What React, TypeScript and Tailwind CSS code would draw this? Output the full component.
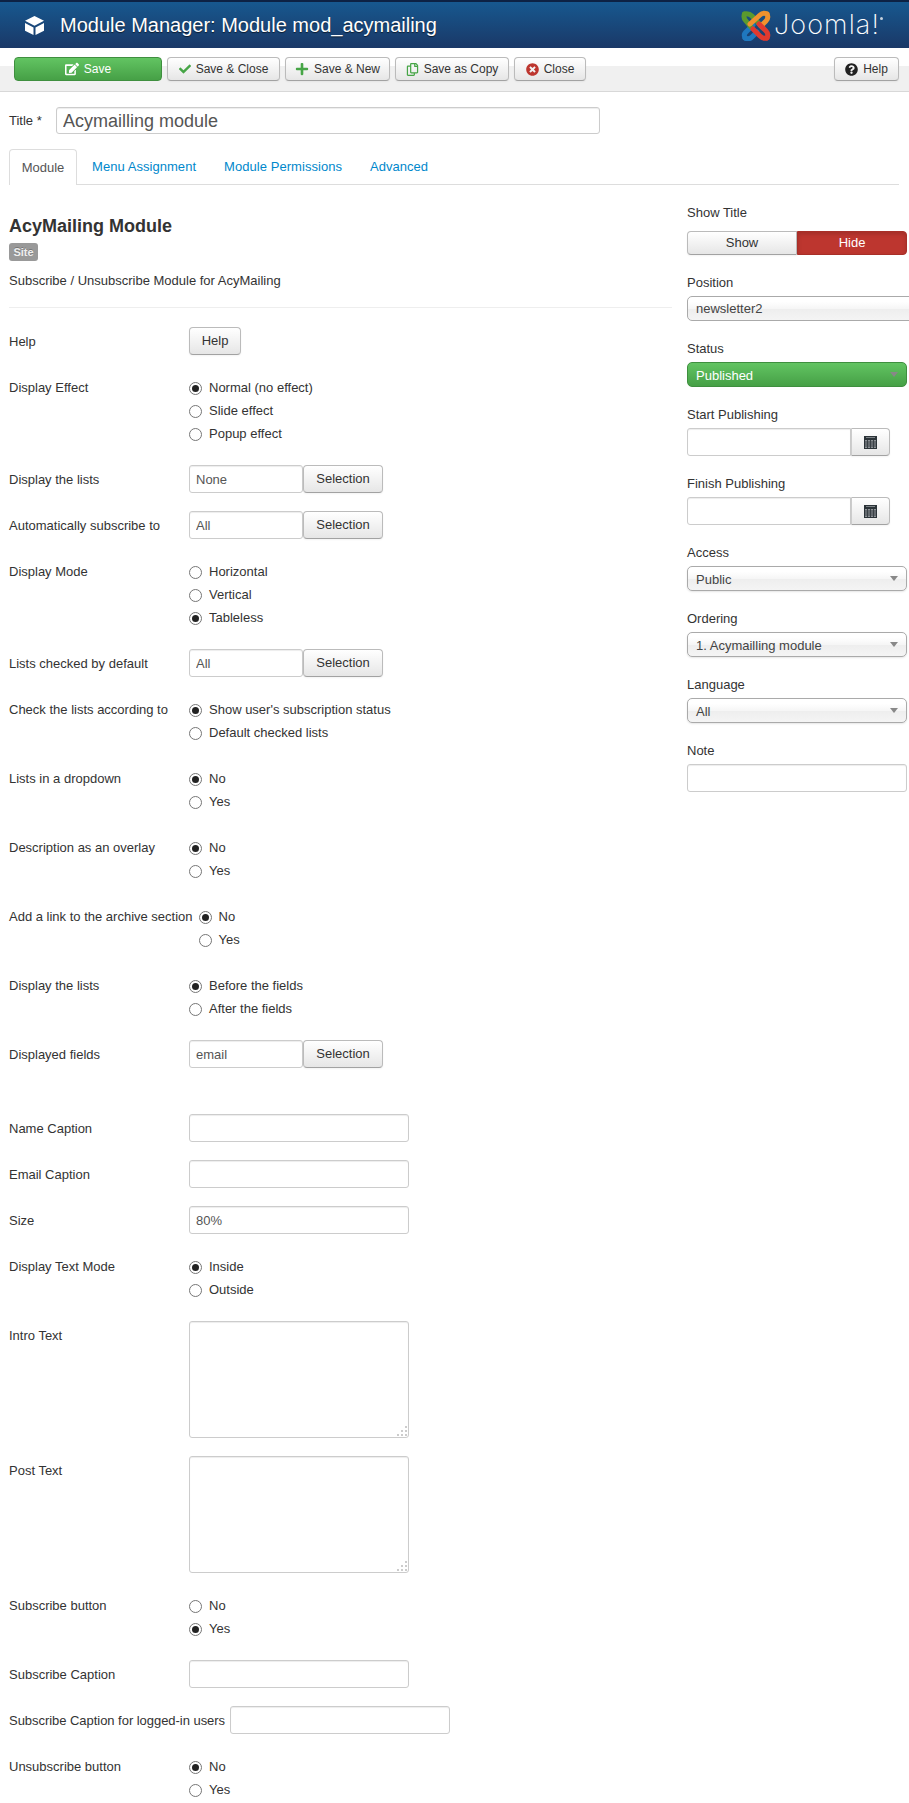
import React from 'react';
import { FaCheck, FaPlus, FaRegCopy, FaTimesCircle, FaQuestionCircle, FaEdit } from 'react-icons/fa';

const btn =
  'inline-flex items-center justify-center rounded-[4px] border border-[#bbb] border-b-[#a2a2a2] bg-[linear-gradient(#fff,#e6e6e6)] text-[#333] shadow-[inset_0_1px_0_rgba(255,255,255,.2),0_1px_2px_rgba(0,0,0,.05)]';
const field =
  'block rounded-[3px] border border-[#ccc] bg-white px-[6px] text-[#555] shadow-[inset_0_1px_1px_rgba(0,0,0,.075)] outline-none';

const JoomlaLogo: React.FC = () => (
  <svg width="30" height="31" viewBox="0 0 30 31" className="block" fill="none" strokeLinecap="round" strokeLinejoin="round">
    <path d="M4 28 Q2 24 6 21 L12 15" stroke="#1f78bf" strokeWidth="5" />
    <path d="M4 28 Q8 30 11 27 L16 22" stroke="#1f78bf" strokeWidth="5" />
    <path d="M3.5 4 Q8 3 11 6 L22 18" stroke="#5b9a2e" strokeWidth="5" />
    <path d="M3.5 4 Q2 8 5 11 L10 17" stroke="#5b9a2e" strokeWidth="5" />
    <path d="M26 4 Q22 2 19 5 L9 14" stroke="#f0922e" strokeWidth="5" />
    <path d="M26 4 Q28 8 25 11 L20 16" stroke="#f0922e" strokeWidth="5" />
    <path d="M26 28 Q22 29 19 26 L12 19" stroke="#e03a2f" strokeWidth="5" />
    <path d="M26 28 Q28 24 25 21 L18 14" stroke="#e03a2f" strokeWidth="5" />
  </svg>
);

const CubeIcon: React.FC = () => (
  <svg width="19" height="19" viewBox="0 0 19 19" fill="#fff" className="block shrink-0">
    <polygon points="9.5,0 19,4.8 9.5,9.8 0,4.8" />
    <polygon points="0,7 8.5,11.6 8.5,19 0,14.8" />
    <polygon points="19,7 10.5,11.6 10.5,19 19,14.8" />
  </svg>
);

const CalendarIcon: React.FC = () => (
  <svg width="13" height="13" viewBox="0 0 13 13" className="block">
    <rect width="13" height="13" fill="#2b3338" />
    <rect x="1" y="4" width="11" height="8" fill="#8d9296" />
    <path d="M1 6H12M1 8H12M1 10H12M3.5 4V12M6.5 4V12M9.5 4V12" stroke="#3a4146" strokeWidth="1" />
    <rect x="2" y="1" width="9" height="1" fill="#7d8387" />
  </svg>
);

const ToolButton: React.FC<{ w: string; icon?: React.ReactNode; label: string }> = ({ w, icon, label }) => (
  <button className={`${btn} ${w} h-[24px] gap-[5px] text-[12px]`}>
    {icon}
    {label}
  </button>
);

const Radio: React.FC<{ label: string; checked?: boolean }> = ({ label, checked }) => (
  <div className="mb-[5px] flex h-[18px] items-center">
    <span className="flex h-[13px] w-[13px] shrink-0 items-center justify-center rounded-full border border-[#767676] bg-white">
      {checked && <span className="h-[7px] w-[7px] rounded-full bg-[#222]" />}
    </span>
    <span className="ml-[7px]">{label}</span>
  </div>
);

const Row: React.FC<{ label: string; labelClass?: string; children?: React.ReactNode }> = ({ label, labelClass = 'pr-[6px]', children }) => (
  <div className="mb-[18px] flex">
    <div className={`min-w-[180px] shrink-0 whitespace-nowrap pt-[6px] ${labelClass}`}>{label}</div>
    <div>{children}</div>
  </div>
);

const Radios: React.FC<{ label: string; options: string[]; checked: number }> = ({ label, options, checked }) => (
  <Row label={label}>
    <div className="-mb-[1px] pt-[6px]">
      {options.map((o, i) => (
        <Radio key={o} label={o} checked={i === checked} />
      ))}
    </div>
  </Row>
);

const TextRow: React.FC<{ label: string; labelClass?: string; value?: string }> = ({ label, labelClass, value }) => (
  <Row label={label} labelClass={labelClass}>
    <input readOnly value={value ?? ''} className={`${field} h-[28px] w-[220px] text-[13px]`} />
  </Row>
);

const SelectionRow: React.FC<{ label: string; value: string }> = ({ label, value }) => (
  <Row label={label}>
    <div className="flex">
      <input readOnly value={value} className={`${field} h-[28px] w-[114px] text-[13px]`} />
      <button className={`${btn} h-[28px] w-[80px] text-[13px]`}>Selection</button>
    </div>
  </Row>
);

const AreaRow: React.FC<{ label: string }> = ({ label }) => (
  <Row label={label}>
    <div className="relative h-[117px] w-[220px]">
      <textarea readOnly className={`${field} h-full w-full resize-none text-[13px]`} />
      <svg width="12" height="12" viewBox="0 0 12 12" className="absolute bottom-[1px] right-[1px]" fill="#ccc">
        <rect x="9" y="1" width="2" height="2" />
        <rect x="5" y="5" width="2" height="2" />
        <rect x="9" y="5" width="2" height="2" />
        <rect x="1" y="9" width="2" height="2" />
        <rect x="5" y="9" width="2" height="2" />
        <rect x="9" y="9" width="2" height="2" />
      </svg>
    </div>
  </Row>
);

const Side: React.FC<{ label: string; children: React.ReactNode }> = ({ label, children }) => (
  <div className="mb-[18px]">
    <div className="mb-[4px] h-[19px] pt-[1px]">{label}</div>
    {children}
  </div>
);

const Select: React.FC<{ value: string }> = ({ value }) => (
  <div className="relative h-[25px] w-[220px] rounded-[5px] border border-[#aaa] bg-[linear-gradient(#fff_20%,#f6f6f6_50%,#eee_52%,#f4f4f4_100%)] pl-[8px] text-[13px] leading-[25px] text-[#444] shadow-[0_1px_2px_rgba(0,0,0,.1)]">
    {value}
    <span className="absolute right-[8px] top-[9px] h-0 w-0 border-x-[4px] border-t-[5px] border-x-transparent border-t-[#888]" />
  </div>
);

const DateField: React.FC = () => (
  <div className="flex">
    <input readOnly className={`${field} h-[28px] w-[164px] rounded-r-none text-[13px]`} />
    <button className={`${btn} h-[28px] w-[39px] rounded-l-none border-l-[#ccc]`}>
      <CalendarIcon />
    </button>
  </div>
);

export default function App() {
  return (
    <div className="h-[1803px] w-[909px] overflow-hidden bg-white font-['Liberation_Sans',Arial,sans-serif] text-[13px] leading-[18px] text-[#333]">
      <header className="flex h-[48px] items-center justify-between border-t-2 border-[#0d2244] bg-[linear-gradient(#17588f,#1a3867)] pl-[25px] pr-[26px]">
        <div className="flex items-center">
          <CubeIcon />
          <h1 className="ml-[16px] text-[20px] leading-[24px] text-white [text-shadow:0_1px_1px_rgba(0,0,0,.6)]">
            Module Manager: Module mod_acymailing
          </h1>
        </div>
        <div className="flex items-center">
          <JoomlaLogo />
          <span className="ml-[3px] font-['Inter',sans-serif] text-[27px] font-extralight leading-[34px] tracking-[1.1px] text-white">
            Joomla!
          </span>
          <span className="mb-[14px] h-[3px] w-[3px] rounded-full bg-[#c5d0dc]" />
        </div>
      </header>

      <div className="flex h-[44px] justify-between border-b border-[#d8d8d8] bg-[linear-gradient(#fff_41%,#f0f0f0_41%)] pl-[14px] pr-[10px] pt-[9px]">
        <div className="flex gap-[5px]">
          <button className="inline-flex h-[24px] w-[148px] items-center justify-center gap-[5px] rounded-[4px] border border-[#3f8f3f] bg-[linear-gradient(#62c462,#46a046)] text-[12px] text-white">
            <FaEdit className="text-[14px]" />
            Save
          </button>
          <ToolButton w="w-[113px]" icon={<FaCheck className="text-[12px] text-[#46a546]" />} label="Save & Close" />
          <ToolButton w="w-[105px]" icon={<FaPlus className="text-[14px] text-[#46a546]" />} label="Save & New" />
          <ToolButton w="w-[114px]" icon={<FaRegCopy className="text-[13px] text-[#46a546]" />} label="Save as Copy" />
          <ToolButton w="w-[72px]" icon={<FaTimesCircle className="text-[13px] text-[#bd362f]" />} label="Close" />
        </div>
        <ToolButton w="w-[65px]" icon={<FaQuestionCircle className="text-[13px] text-[#222]" />} label="Help" />
      </div>

      <div className="px-[9px] pt-[15px]">
        <div className="flex items-center">
          <div className="w-[47px]">Title *</div>
          <input readOnly value="Acymailling module" className={`${field} h-[27px] w-[544px] pt-[2px] text-[18px]`} />
        </div>

        <div className="mt-[15px] flex h-[36px] w-[890px] border-b border-[#ddd]">
          <div className="h-[36px] w-[68px] rounded-t-[4px] border border-b-0 border-[#ddd] bg-white pt-[9px] text-center text-[#555]">
            Module
          </div>
          <div className="ml-[15px] pt-[9px] tracking-[0.05px] text-[#0088cc]">Menu Assignment</div>
          <div className="ml-[28px] pt-[9px] tracking-[0.05px] text-[#0088cc]">Module Permissions</div>
          <div className="ml-[28px] pt-[9px] text-[#0088cc]">Advanced</div>
        </div>

        <div className="flex">
          <div className="w-[663px] shrink-0">
            <h2 className="mt-[29px] text-[18px] font-bold leading-[24px]">AcyMailing Module</h2>
            <span className="mt-[5px] block h-[18px] w-[29px] rounded-[3px] bg-[#999] text-center text-[11px] font-bold leading-[18px] text-[#eee] [text-shadow:0_-1px_0_rgba(0,0,0,.25)]">
              Site
            </span>
            <p className="mt-[11px]">Subscribe / Unsubscribe Module for AcyMailing</p>
            <hr className="mb-[19px] mt-[17px] border-[#eee]" />

            <Row label="Help">
              <button className={`${btn} h-[28px] w-[52px] text-[13px]`}>Help</button>
            </Row>
            <Radios label="Display Effect" options={['Normal (no effect)', 'Slide effect', 'Popup effect']} checked={0} />
            <SelectionRow label="Display the lists" value="None" />
            <SelectionRow label="Automatically subscribe to" value="All" />
            <Radios label="Display Mode" options={['Horizontal', 'Vertical', 'Tableless']} checked={2} />
            <SelectionRow label="Lists checked by default" value="All" />
            <Radios label="Check the lists according to" options={["Show user's subscription status", 'Default checked lists']} checked={0} />
            <Radios label="Lists in a dropdown" options={['No', 'Yes']} checked={0} />
            <Radios label="Description as an overlay" options={['No', 'Yes']} checked={0} />
            <Radios label="Add a link to the archive section" options={['No', 'Yes']} checked={0} />
            <Radios label="Display the lists" options={['Before the fields', 'After the fields']} checked={0} />
            <SelectionRow label="Displayed fields" value="email" />
            <div className="h-[28px]" />
            <TextRow label="Name Caption" />
            <TextRow label="Email Caption" />
            <TextRow label="Size" value="80%" />
            <Radios label="Display Text Mode" options={['Inside', 'Outside']} checked={0} />
            <AreaRow label="Intro Text" />
            <AreaRow label="Post Text" />
            <Radios label="Subscribe button" options={['No', 'Yes']} checked={1} />
            <TextRow label="Subscribe Caption" />
            <TextRow label="Subscribe Caption for logged-in users" labelClass="pr-[5px] tracking-[-0.04px]" />
            <Radios label="Unsubscribe button" options={['No', 'Yes']} checked={0} />
          </div>

          <aside className="ml-[15px] w-[220px] shrink-0 pt-[18px]">
            <Side label="Show Title">
              <div className="mt-[9px] flex h-[24px] text-[13px]">
                <button className={`${btn} w-[110px] rounded-r-none`}>Show</button>
                <button className="w-[110px] rounded-r-[4px] border border-[#a82f28] bg-[#bd362f] text-white shadow-[inset_0_2px_4px_rgba(0,0,0,.15)]">
                  Hide
                </button>
              </div>
            </Side>
            <Side label="Position">
              <div className="h-[25px] w-[260px] rounded-[5px] border border-[#aaa] bg-[linear-gradient(#fff_20%,#f6f6f6_50%,#eee_52%,#f4f4f4_100%)] pl-[8px] leading-[24px] text-[#444]">
                newsletter2
              </div>
            </Side>
            <Side label="Status">
              <div className="relative h-[25px] w-[220px] rounded-[5px] border border-[#3f8f3f] bg-[linear-gradient(#62c462,#46a046)] pl-[8px] leading-[25px] text-white">
                Published
                <span className="absolute right-[8px] top-[9px] h-0 w-0 border-x-[4px] border-t-[5px] border-x-transparent border-t-[#888]" />
              </div>
            </Side>
            <Side label="Start Publishing">
              <DateField />
            </Side>
            <Side label="Finish Publishing">
              <DateField />
            </Side>
            <Side label="Access">
              <Select value="Public" />
            </Side>
            <Side label="Ordering">
              <Select value="1. Acymailling module" />
            </Side>
            <Side label="Language">
              <Select value="All" />
            </Side>
            <Side label="Note">
              <input readOnly className={`${field} h-[28px] w-[220px] text-[13px]`} />
            </Side>
          </aside>
        </div>
      </div>
    </div>
  );
}
